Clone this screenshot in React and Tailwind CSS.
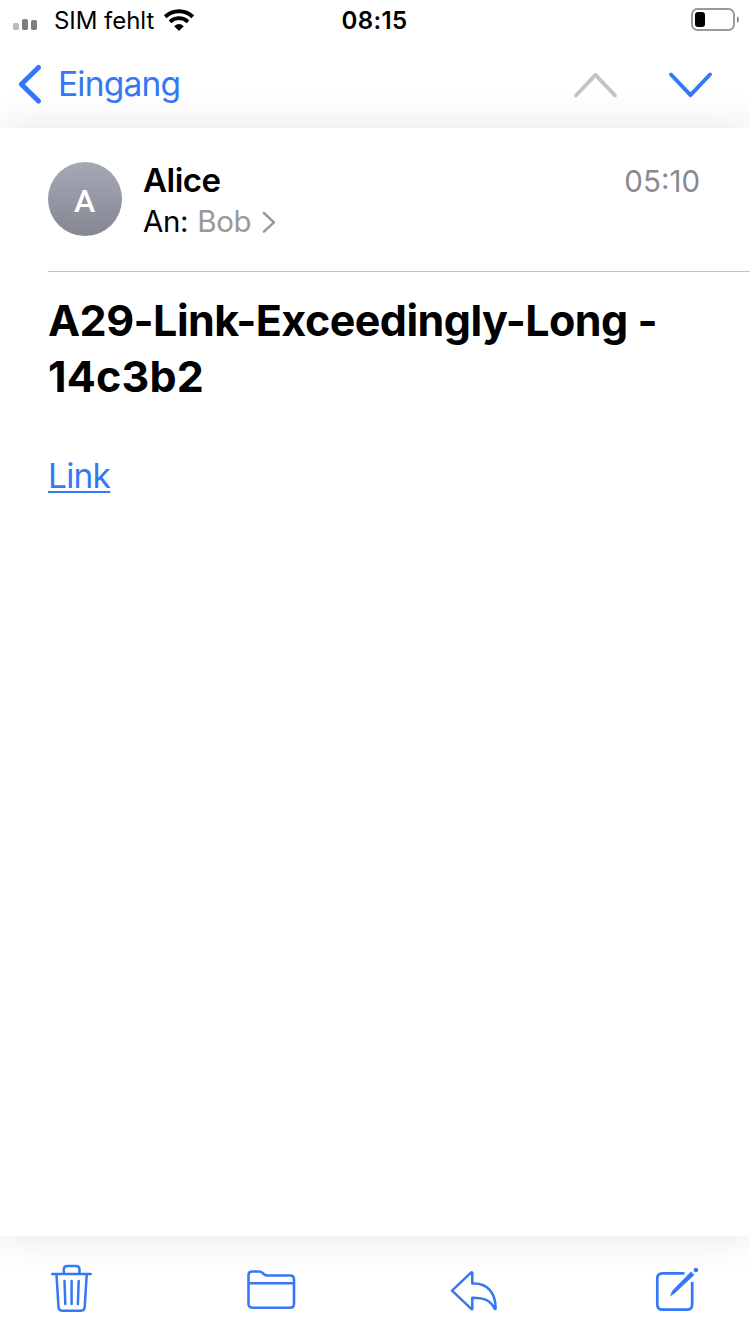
function StatusBar() {
  return (
    <div className="flex h-10 shrink-0 items-center">
      <div className="flex flex-1 items-center pl-[13px]">
        <svg className="h-10 w-[26px]" viewBox="0 0 26 40">
          <rect x="0" y="23" width="6" height="7" rx="1.6" fill="#b9b9b9" />
          <rect x="9" y="19" width="6" height="11" rx="1.8" fill="#7f7f7f" />
          <rect x="18" y="20" width="6" height="10" rx="1.8" fill="#7f7f7f" />
        </svg>
        <span className="ml-[15px] pt-[2px] text-[24px] leading-[40px] tracking-[-0.05px] whitespace-nowrap">SIM fehlt</span>
        <svg className="ml-[9px] h-10 w-8" viewBox="0 0 32 40" fill="none" stroke="#000">
          <path d="M2.2 16.8C10 9.400 22 9.400 29.800 16.800" strokeWidth="4" />
          <path d="M7 21.800C12.100 17 19.900 17 25 21.800" strokeWidth="3.800" />
          <path d="M11.200 26.200Q16 22 20.800 26.200L16 31Z" fill="#000" stroke="none" />
        </svg>
      </div>
      <span className="-ml-[2px] pt-[2px] pr-[2px] text-[24px] leading-[40px] font-semibold tracking-[0.4px]">08:15</span>
      <div className="flex flex-1 justify-end pr-[10px]">
        <svg className="h-10 w-[50px]" viewBox="0 0 50 40">
          <rect x="2" y="9" width="42" height="21" rx="5.500" fill="none" stroke="#999" strokeWidth="2" />
          <rect x="5" y="12" width="10" height="15" rx="3" />
          <path d="M47 16Q49 17.500 49 19.500T47 23Z" fill="#888" />
        </svg>
      </div>
    </div>
  );
}

function NavBar() {
  return (
    <nav className="flex h-[88px] shrink-0 items-center text-[#3478f6]">
      <svg className="ml-4 h-[88px] w-7" viewBox="0 0 28 88" fill="none" stroke="currentColor" strokeWidth="5" strokeLinecap="round" strokeLinejoin="round">
        <path d="M22.500 27.500L5.300 44.200L22.500 61" />
      </svg>
      <span className="ml-[14px] text-[33.5px] leading-[88px] tracking-[-0.8px]">Eingang</span>
      <svg className="mr-[34px] ml-auto h-[88px] w-[144px]" viewBox="0 0 144 88" fill="none" strokeWidth="3.900" strokeLinecap="round" strokeLinejoin="round">
        <path d="M4 55.500L23.500 34.800L43 55.500" stroke="#c4c4c4" />
        <path d="M99 34.500L118.500 55.200L138 34.500" stroke="currentColor" />
      </svg>
    </nav>
  );
}

function Message() {
  return (
    <main className="flex-1 bg-white pl-12 shadow-[0_0_40px_rgba(0,0,0,0.11)]">
      <header className="flex h-36 border-b border-[#c3c3c5]">
        <div className="mt-[34px] flex size-[74px] items-center justify-center rounded-full bg-linear-to-b from-[#a5a9b7] to-[#848791] pt-[3px] pr-[1px] font-[Roboto,sans-serif] text-[32px] leading-none font-medium text-white">A</div>
        <div className="ml-[21px] pt-[31px]">
          <div className="text-[33px] leading-[42px] font-semibold tracking-[-0.5px]">Alice</div>
          <div className="flex items-center text-[29.500px] leading-[40px] tracking-[-0.35px]">
            <span>An:</span>
            <span className="ml-[9px] text-[#999]">Bob</span>
            <svg className="ml-[11px] h-10 w-[14px]" viewBox="0 0 14 40" fill="none" stroke="#999" strokeWidth="2.500" strokeLinecap="round" strokeLinejoin="round">
              <path d="M1.900 12L12 21.300L1.900 30.600" />
            </svg>
          </div>
        </div>
        <time className="mt-[31px] mr-[50px] ml-auto text-[29.500px] leading-[44px] text-[#8a8a8e]">05:10</time>
      </header>
      <h1 className="w-[650px] pt-5 text-[43px] leading-[56px] font-bold tracking-[-0.53px]">
        A29-Link-Exceedingly-Long - <span className="tracking-[0.2px]">14c3b2</span>
      </h1>
      <p className="mt-[48px] text-[33.500px] leading-[48px] tracking-[-0.75px]">
        <a className="text-[#3478f6] underline decoration-2 underline-offset-[3px]">Link</a>
      </p>
    </main>
  );
}

function Toolbar() {
  return (
    <footer className="flex h-[98px] shrink-0 justify-between px-[50px] text-[#3478f6]">
      <svg className="h-[98px] w-11" viewBox="0 0 44 98" fill="none" stroke="currentColor" strokeWidth="2.500" strokeLinecap="round" strokeLinejoin="round">
        <path d="M2.300 38H40.700M13.800 37V33.500Q13.800 30 17.300 30H26Q29.500 30 29.500 33.500V37M6.500 39L8.500 71Q8.700 74.700 12.300 74.700H31Q34.500 74.700 34.700 71L36.700 39M14.500 45L15.300 68M21.600 45V68M28.700 45L27.900 68" />
      </svg>
      <svg className="-ml-[3px] h-[98px] w-[50px]" viewBox="0 0 50 98" fill="none" stroke="currentColor" strokeWidth="2.600" strokeLinecap="round" strokeLinejoin="round">
        <path d="M1.500 39.300Q1.500 35.500 5.300 35.500H12Q14 35.500 15.500 36.900L17 38.200Q18.500 39.500 20.500 39.500H43Q47 39.500 47 43.500V67.700Q47 71.700 43 71.700H5.500Q1.500 71.700 1.500 67.700ZM1.500 47.200H47" />
      </svg>
      <svg className="-ml-[2px] h-[98px] w-12" viewBox="0 0 48 98" fill="none" stroke="currentColor" strokeWidth="2.500" strokeLinecap="round" strokeLinejoin="round">
        <path d="M2 54.700L21 36.700Q22.300 35.700 22.300 37.200V47.500C37 46.700 45.500 56.200 45.700 72.200Q45.500 74.200 44.300 72.200C40.500 64.700 35 61.700 22.300 61.700V72.200Q22.300 74 21 72.700Z" />
      </svg>
      <svg className="h-[98px] w-[46px]" viewBox="0 0 46 98" fill="none" stroke="currentColor" strokeWidth="2.700" strokeLinecap="butt" strokeLinejoin="round">
        <path d="M30.500 37.300H8.500Q3.300 37.300 3.300 42.500V68.500Q3.300 73.700 8.500 73.700H33Q38.200 73.700 38.200 68.500V46" />
        <path d="M37 35.600L40.300 38.900L20.500 57.600L16 60.400L18 55Z" fill="currentColor" stroke="none" />
        <circle cx="41.900" cy="34" r="2.300" fill="currentColor" stroke="none" />
      </svg>
    </footer>
  );
}

export default function App() {
  return (
    <div className="flex h-[1334px] w-[750px] flex-col overflow-hidden bg-white font-[Inter,sans-serif] text-black">
      <StatusBar />
      <NavBar />
      <Message />
      <Toolbar />
    </div>
  );
}
